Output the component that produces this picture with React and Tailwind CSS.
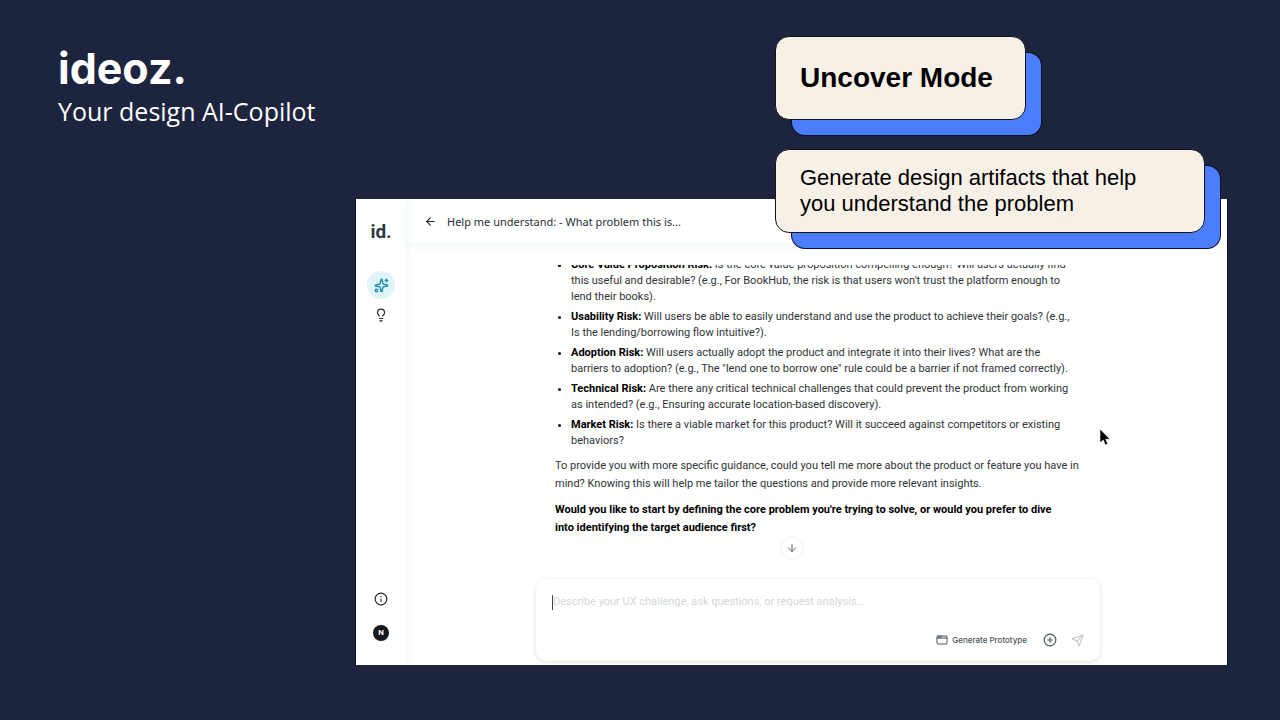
import {
  AppWindow, ArrowDown, ArrowLeft, CirclePlus, Info, Lightbulb, Send, Sparkles,
} from "lucide-react";

const risks = [
  {
    name: "Core Value Proposition Risk:",
    lines: [
      "Is the core value proposition compelling enough? Will users actually find",
      "this useful and desirable? (e.g., For BookHub, the risk is that users won't trust the platform enough to",
      "lend their books).",
    ],
  },
  {
    name: "Usability Risk:",
    lines: [
      "Will users be able to easily understand and use the product to achieve their goals? (e.g.,",
      "Is the lending/borrowing flow intuitive?).",
    ],
  },
  {
    name: "Adoption Risk:",
    lines: [
      "Will users actually adopt the product and integrate it into their lives? What are the",
      "barriers to adoption? (e.g., The \"lend one to borrow one\" rule could be a barrier if not framed correctly).",
    ],
  },
  {
    name: "Technical Risk:",
    lines: [
      "Are there any critical technical challenges that could prevent the product from working",
      "as intended? (e.g., Ensuring accurate location-based discovery).",
    ],
  },
  {
    name: "Market Risk:",
    lines: [
      "Is there a viable market for this product? Will it succeed against competitors or existing",
      "behaviors?",
    ],
  },
];

function Callout({ className, children }) {
  return (
    <div
      className={
        "flex h-[84px] items-center rounded-[14px] border border-[#10131c] bg-[#f7f0e7] px-6 text-black shadow-[16px_16px_0_-1px_#4b7dfd,16px_16px_0_0_#0b1024] " +
        className
      }
    >
      {children}
    </div>
  );
}

function Sidebar() {
  return (
    <aside className="flex w-[50px] shrink-0 flex-col items-center shadow-[2px_0_8px_rgba(190,225,232,0.2)]">
      <a href="#home" className="mt-[23px] text-[19px] leading-5 font-bold text-[#2b3a42]">id.</a>
      <nav className="mt-[29px] flex flex-col items-center gap-[2px]">
        <button aria-label="Assistant" className="grid size-7 place-items-center rounded-full bg-[#dff5f9] text-[#2190b2]">
          <Sparkles size={15} strokeWidth={2.3} />
        </button>
        <button aria-label="Ideas" className="grid size-7 place-items-center text-[#22282c]">
          <Lightbulb size={14} />
        </button>
      </nav>
      <div className="mt-auto mb-6 flex flex-col items-center gap-[19px]">
        <button aria-label="Information" className="text-[#22282c]">
          <Info size={14} />
        </button>
        <button className="grid size-4 place-items-center rounded-full bg-[#14191d] text-[8px] leading-none font-bold text-white">
          N
        </button>
      </div>
    </aside>
  );
}

function Composer() {
  return (
    <form className="mr-[127px] ml-[130px] flex h-[82px] shrink-0 flex-col rounded-[10px] bg-white px-4 pt-[13px] pb-[13px] shadow-[0_1px_4px_rgba(60,80,80,0.18)]">
      <div className="flex items-center">
        <span className="h-[15px] w-px bg-[#3c4246]" />
        <input
          aria-label="Message"
          placeholder="Describe your UX challenge, ask questions, or request analysis..."
          className="w-full bg-transparent text-[11px] leading-5 outline-none placeholder:text-[#d3d8da]"
        />
      </div>
      <div className="mt-auto flex items-center justify-end text-[#4a5256]">
        <button type="button" className="flex items-center gap-1 font-[Inter,sans-serif] text-[8px] leading-4 font-medium">
          <AppWindow size={12} />
          Generate Prototype
        </button>
        <button type="button" aria-label="Add attachment" className="ml-4">
          <CirclePlus size={14} />
        </button>
        <button type="button" aria-label="Send" className="ml-[14px] text-[#c4cacc]">
          <Send size={13} />
        </button>
      </div>
    </form>
  );
}

function AppPanel() {
  return (
    <section className="mr-[52px] ml-[355px] flex h-[466px] overflow-hidden border-x border-[#0d1120] bg-white font-[Roboto,sans-serif]">
      <Sidebar />
      <div className="flex min-w-0 flex-1 flex-col">
        <header className="flex h-[44px] shrink-0 items-center gap-[10px] px-[18px] pt-px text-[#2a2f33] shadow-[0_3px_10px_rgba(190,220,228,0.2)]">
          <button aria-label="Back"><ArrowLeft size={13} /></button>
          <h1 className="font-['Noto_Sans',sans-serif] text-[11px] leading-4">Help me understand: - What problem this is...</h1>
        </header>
        <div className="mt-[22px] ml-[149px] flex h-[272px] shrink-0 flex-col justify-end overflow-hidden text-[11px] leading-4 whitespace-nowrap text-[#2f3336]">
          <ul className="flex list-disc flex-col gap-1 pl-4 marker:text-black">
            {risks.map((risk) => (
              <li key={risk.name}>
                <strong className="font-bold text-black">{risk.name}</strong>{" "}
                {risk.lines.map((line, i) => (
                  <span key={line}>
                    {i > 0 && <br />}
                    {line}
                  </span>
                ))}
              </li>
            ))}
          </ul>
          <p className="mt-2 leading-[18px]">
            To provide you with more specific guidance, could you tell me more about the product or feature you have in<br />
            mind? Knowing this will help me tailor the questions and provide more relevant insights.
          </p>
          <p className="mt-2 leading-[18px] font-bold text-black">
            Would you like to start by defining the core problem you're trying to solve, or would you prefer to dive<br />
            into identifying the target audience first?
          </p>
        </div>
        <div className="mt-px mr-[50px] mb-[21px] flex justify-center">
          <button aria-label="Scroll to latest" className="grid size-5 place-items-center rounded-full text-[#555d61] shadow-[0_0_3px_rgba(150,180,180,0.3)]">
            <ArrowDown size={12} />
          </button>
        </div>
        <Composer />
      </div>
    </section>
  );
}

export default function App() {
  return (
    <main className="relative min-h-screen overflow-hidden bg-[#1d243e]">
      <header className="h-[199px] pt-[43px] pl-[58px] text-white">
        <p className="font-[Inter,sans-serif] text-[43px] leading-[50px] font-bold">ideoz.</p>
        <p className="font-['Open_Sans',sans-serif] text-[25px] leading-9">Your design AI-Copilot</p>
      </header>
      <AppPanel />
      <div className="absolute top-[36px] left-[775px] flex flex-col items-start gap-[29px] font-['Liberation_Sans',sans-serif]">
        <Callout className="w-[251px]">
          <h2 className="text-[28px] leading-8 font-bold whitespace-nowrap">Uncover Mode</h2>
        </Callout>
        <Callout className="w-[430px]">
          <p className="text-[22px] leading-[26px] whitespace-nowrap">
            Generate design artifacts that help<br />you understand the problem
          </p>
        </Callout>
      </div>
      <svg aria-hidden="true" viewBox="0 0 12 18" className="absolute top-[428px] left-[1099px] h-[18px] w-3">
        <path d="M1 1v14l3.2-3 2.1 5 2.5-1-2.1-4.8H11z" fill="#000" stroke="#fff" strokeWidth=".6" />
      </svg>
    </main>
  );
}
